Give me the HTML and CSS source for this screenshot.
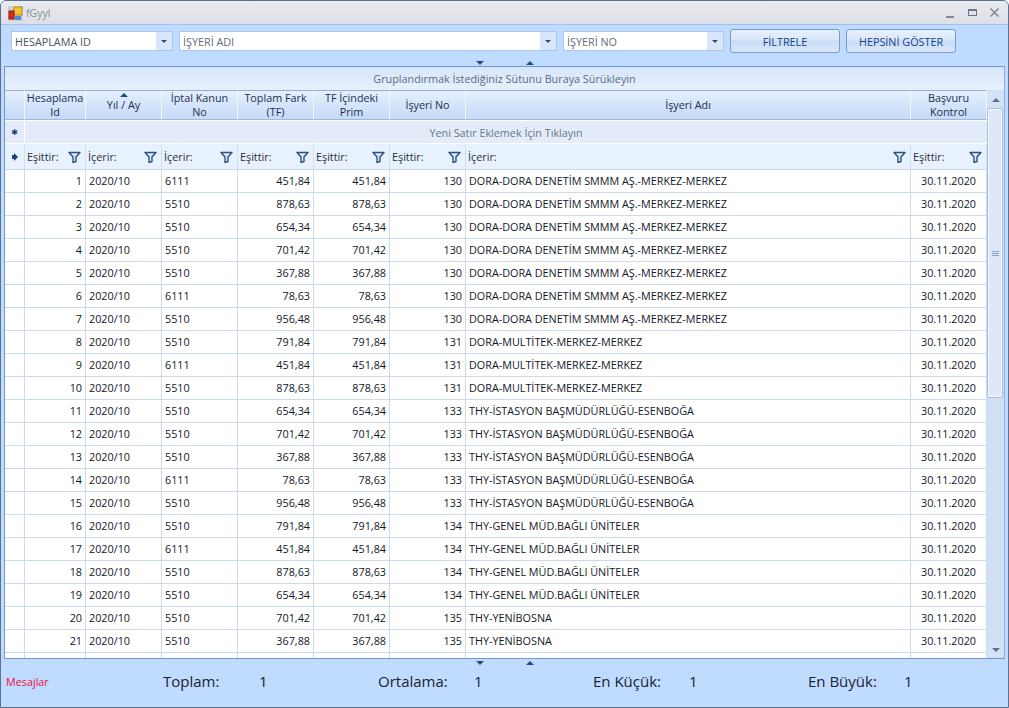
FILE: index.html
```html
<!DOCTYPE html>
<html lang="tr">
<head>
<meta charset="utf-8">
<title>fGyyl</title>
<link rel="stylesheet" href="styles.css">
</head>
<body>
<svg class="defs" width="0" height="0"><defs>
<symbol id="funnel" viewBox="0 0 13 12"><path d="M1 1.500h11L8 6v4.500l-3 1V6z" fill="#dbe8f8" stroke="#2c5080" stroke-width="1.400" stroke-linejoin="round"/></symbol>
</defs></svg>
<div class="window">
  <header class="titlebar">
    <svg class="appicon" width="15" height="15" viewBox="0 0 15 15"><rect x="0" y="0" width="15" height="15" fill="#cfcfcf"/><rect x="6" y="1" width="8" height="8" fill="#f4c430" stroke="#b98a1a"/><rect x="1" y="5" width="5" height="8" fill="#d42a20" stroke="#8f1a14"/><rect x="7" y="10" width="6" height="4" fill="#4a8ae0"/></svg>
    <span class="title">fGyyl</span>
    <div class="winbtns">
      <svg width="12" height="12" viewBox="0 0 12 12"><rect x="1" y="9" width="8" height="2" fill="#7f8894"/></svg>
      <svg width="12" height="12" viewBox="0 0 12 12"><rect x="1.500" y="2.500" width="8" height="6" fill="none" stroke="#6a7687"/><rect x="1" y="2" width="9" height="2" fill="#6a7687"/></svg>
      <svg width="12" height="12" viewBox="0 0 12 12"><path d="M1.500 1.500l8 8M9.500 1.500l-8 8" stroke="#7f8894" stroke-width="1.500"/></svg>
    </div>
  </header>
  <section class="filters">
    <div class="combo combo-id"><span>HESAPLAMA ID</span><i class="drop"></i></div>
    <div class="combo combo-name"><span>İŞYERİ ADI</span><i class="drop"></i></div>
    <div class="combo combo-no"><span>İŞYERİ NO</span><i class="drop"></i></div>
    <button class="btn btn-filter">FİLTRELE</button>
    <button class="btn btn-all">HEPSİNİ GÖSTER</button>
  </section>
  <div class="splitter"><i class="arrow-down"></i><i class="arrow-up"></i></div>
  <main class="grid">
    <div class="group">Gruplandırmak İstediğiniz Sütunu Buraya Sürükleyin</div>
    <div class="grid-body">
      <div class="table-wrap">
      <table>
        <colgroup><col class="c-ind"><col class="c-id"><col class="c-n"><col class="c-n"><col class="c-n"><col class="c-n"><col class="c-n"><col class="c-name"><col class="c-n"></colgroup>
        <thead>
          <tr class="head">
            <th></th><th>Hesaplama<br>Id</th><th class="sorted">Yıl / Ay</th><th>İptal Kanun<br>No</th><th>Toplam Fark<br>(TF)</th><th>TF İçindeki<br>Prim</th><th>İşyeri No</th><th>İşyeri Adı</th><th>Başvuru<br>Kontrol</th>
          </tr>
          <tr class="newrow">
            <td class="ind star">✱</td><td colspan="8">Yeni Satır Eklemek İçin Tıklayın</td>
          </tr>
          <tr class="filter">
            <td class="ind"><i class="focus"></i></td>
            <td><div class="f"><span>Eşittir:</span><svg width="13" height="12"><use href="#funnel"/></svg></div></td>
            <td><div class="f"><span>İçerir:</span><svg width="13" height="12"><use href="#funnel"/></svg></div></td>
            <td><div class="f"><span>İçerir:</span><svg width="13" height="12"><use href="#funnel"/></svg></div></td>
            <td><div class="f"><span>Eşittir:</span><svg width="13" height="12"><use href="#funnel"/></svg></div></td>
            <td><div class="f"><span>Eşittir:</span><svg width="13" height="12"><use href="#funnel"/></svg></div></td>
            <td><div class="f"><span>Eşittir:</span><svg width="13" height="12"><use href="#funnel"/></svg></div></td>
            <td><div class="f"><span>İçerir:</span><svg width="13" height="12"><use href="#funnel"/></svg></div></td>
            <td><div class="f"><span>Eşittir:</span><svg width="13" height="12"><use href="#funnel"/></svg></div></td>
          </tr>
        </thead>
        <tbody>
          <tr><td></td><td class="r">1</td><td>2020/10</td><td>6111</td><td class="r">451,84</td><td class="r">451,84</td><td class="r">130</td><td>DORA-DORA DENETİM SMMM AŞ.-MERKEZ-MERKEZ</td><td class="c">30.11.2020</td></tr>
          <tr><td></td><td class="r">2</td><td>2020/10</td><td>5510</td><td class="r">878,63</td><td class="r">878,63</td><td class="r">130</td><td>DORA-DORA DENETİM SMMM AŞ.-MERKEZ-MERKEZ</td><td class="c">30.11.2020</td></tr>
          <tr><td></td><td class="r">3</td><td>2020/10</td><td>5510</td><td class="r">654,34</td><td class="r">654,34</td><td class="r">130</td><td>DORA-DORA DENETİM SMMM AŞ.-MERKEZ-MERKEZ</td><td class="c">30.11.2020</td></tr>
          <tr><td></td><td class="r">4</td><td>2020/10</td><td>5510</td><td class="r">701,42</td><td class="r">701,42</td><td class="r">130</td><td>DORA-DORA DENETİM SMMM AŞ.-MERKEZ-MERKEZ</td><td class="c">30.11.2020</td></tr>
          <tr><td></td><td class="r">5</td><td>2020/10</td><td>5510</td><td class="r">367,88</td><td class="r">367,88</td><td class="r">130</td><td>DORA-DORA DENETİM SMMM AŞ.-MERKEZ-MERKEZ</td><td class="c">30.11.2020</td></tr>
          <tr><td></td><td class="r">6</td><td>2020/10</td><td>6111</td><td class="r">78,63</td><td class="r">78,63</td><td class="r">130</td><td>DORA-DORA DENETİM SMMM AŞ.-MERKEZ-MERKEZ</td><td class="c">30.11.2020</td></tr>
          <tr><td></td><td class="r">7</td><td>2020/10</td><td>5510</td><td class="r">956,48</td><td class="r">956,48</td><td class="r">130</td><td>DORA-DORA DENETİM SMMM AŞ.-MERKEZ-MERKEZ</td><td class="c">30.11.2020</td></tr>
          <tr><td></td><td class="r">8</td><td>2020/10</td><td>5510</td><td class="r">791,84</td><td class="r">791,84</td><td class="r">131</td><td>DORA-MULTİTEK-MERKEZ-MERKEZ</td><td class="c">30.11.2020</td></tr>
          <tr><td></td><td class="r">9</td><td>2020/10</td><td>6111</td><td class="r">451,84</td><td class="r">451,84</td><td class="r">131</td><td>DORA-MULTİTEK-MERKEZ-MERKEZ</td><td class="c">30.11.2020</td></tr>
          <tr><td></td><td class="r">10</td><td>2020/10</td><td>5510</td><td class="r">878,63</td><td class="r">878,63</td><td class="r">131</td><td>DORA-MULTİTEK-MERKEZ-MERKEZ</td><td class="c">30.11.2020</td></tr>
          <tr><td></td><td class="r">11</td><td>2020/10</td><td>5510</td><td class="r">654,34</td><td class="r">654,34</td><td class="r">133</td><td>THY-İSTASYON BAŞMÜDÜRLÜĞÜ-ESENBOĞA</td><td class="c">30.11.2020</td></tr>
          <tr><td></td><td class="r">12</td><td>2020/10</td><td>5510</td><td class="r">701,42</td><td class="r">701,42</td><td class="r">133</td><td>THY-İSTASYON BAŞMÜDÜRLÜĞÜ-ESENBOĞA</td><td class="c">30.11.2020</td></tr>
          <tr><td></td><td class="r">13</td><td>2020/10</td><td>5510</td><td class="r">367,88</td><td class="r">367,88</td><td class="r">133</td><td>THY-İSTASYON BAŞMÜDÜRLÜĞÜ-ESENBOĞA</td><td class="c">30.11.2020</td></tr>
          <tr><td></td><td class="r">14</td><td>2020/10</td><td>6111</td><td class="r">78,63</td><td class="r">78,63</td><td class="r">133</td><td>THY-İSTASYON BAŞMÜDÜRLÜĞÜ-ESENBOĞA</td><td class="c">30.11.2020</td></tr>
          <tr><td></td><td class="r">15</td><td>2020/10</td><td>5510</td><td class="r">956,48</td><td class="r">956,48</td><td class="r">133</td><td>THY-İSTASYON BAŞMÜDÜRLÜĞÜ-ESENBOĞA</td><td class="c">30.11.2020</td></tr>
          <tr><td></td><td class="r">16</td><td>2020/10</td><td>5510</td><td class="r">791,84</td><td class="r">791,84</td><td class="r">134</td><td>THY-GENEL MÜD.BAĞLI ÜNİTELER</td><td class="c">30.11.2020</td></tr>
          <tr><td></td><td class="r">17</td><td>2020/10</td><td>6111</td><td class="r">451,84</td><td class="r">451,84</td><td class="r">134</td><td>THY-GENEL MÜD.BAĞLI ÜNİTELER</td><td class="c">30.11.2020</td></tr>
          <tr><td></td><td class="r">18</td><td>2020/10</td><td>5510</td><td class="r">878,63</td><td class="r">878,63</td><td class="r">134</td><td>THY-GENEL MÜD.BAĞLI ÜNİTELER</td><td class="c">30.11.2020</td></tr>
          <tr><td></td><td class="r">19</td><td>2020/10</td><td>5510</td><td class="r">654,34</td><td class="r">654,34</td><td class="r">134</td><td>THY-GENEL MÜD.BAĞLI ÜNİTELER</td><td class="c">30.11.2020</td></tr>
          <tr><td></td><td class="r">20</td><td>2020/10</td><td>5510</td><td class="r">701,42</td><td class="r">701,42</td><td class="r">135</td><td>THY-YENİBOSNA</td><td class="c">30.11.2020</td></tr>
          <tr><td></td><td class="r">21</td><td>2020/10</td><td>5510</td><td class="r">367,88</td><td class="r">367,88</td><td class="r">135</td><td>THY-YENİBOSNA</td><td class="c">30.11.2020</td></tr>
          <tr><td></td><td></td><td></td><td></td><td></td><td></td><td></td><td></td><td></td></tr>
        </tbody>
      </table>
      </div>
      <div class="scrollbar">
        <div class="sb-btn"><i class="sb-up"></i></div>
        <div class="sb-thumb"><i></i></div>
        <div class="sb-track"></div>
        <div class="sb-btn"><i class="sb-down"></i></div>
      </div>
    </div>
  </main>
  <div class="splitter lower"><i class="arrow-down"></i><i class="arrow-up"></i></div>
  <footer class="summary">
    <span class="msg">Mesajlar</span>
    <div class="stat"><span class="k">Toplam:</span><span>1</span></div>
    <div class="stat"><span class="k">Ortalama:</span><span>1</span></div>
    <div class="stat"><span class="k">En Küçük:</span><span>1</span></div>
    <div class="stat"><span class="k">En Büyük:</span><span>1</span></div>
  </footer>
</div>
</body>
</html>
```
FILE: styles.css
```css
* { box-sizing: border-box; }
html, body { margin: 0; padding: 0; }
body { width: 1009px; height: 708px; overflow: hidden; background: #fff; font-family: "Open Sans", "Noto Sans", sans-serif; font-size: 10.800px; color: #101828; }
.defs { position: absolute; }
.window { width: 1009px; height: 708px; display: flex; flex-direction: column; background: #bfdbff; border: 1px solid #5d7090; border-radius: 6px 6px 0 0; overflow: hidden; }
.titlebar { flex: none; height: 24px; display: flex; align-items: center; padding: 0 7px 0 7px; background: linear-gradient(#e9ebef, #dcdfe5); border-bottom: 1px solid #9dc0ee; }
.appicon { display: block; margin-top: 1px; }
.title { margin-left: 3px; font-size: 10.500px; color: #8a8f98; }
.winbtns { margin-left: auto; display: flex; gap: 10px; }
.filters { flex: none; height: 34px; display: flex; align-items: center; padding: 0 0 2px 10px; }
.combo { height: 20px; display: flex; align-items: center; justify-content: space-between; background: #fff; border: 1px solid #a9c6ee; padding-left: 3px; margin-right: 6px; color: #5e6b7c; }
.combo-id { width: 162px; color: #4a5463; }
.combo-name { width: 378px; }
.combo-no { width: 161px; }
.drop { width: 16px; height: 18px; background: #d9e6f8; display: flex; align-items: center; justify-content: center; }
.drop::after { content: ""; border: 3px solid transparent; border-top: 3px solid #2f4a72; border-bottom: 0; }
.btn { height: 24px; padding: 0; margin-right: 6px; border: 1px solid #7a9cc6; border-radius: 3px; background: linear-gradient(#e6f0fd 0, #dbe8fa 45%, #c9dcf6 50%, #d8e6fa 100%); color: #15428b; font: inherit; }
.btn-filter { width: 110px; }
.btn-all { width: 110px; }
.splitter { flex: none; height: 7px; display: flex; justify-content: center; align-items: center; gap: 42px; padding-left: 1px; }
.arrow-down { width: 0; height: 0; border: 4px solid transparent; border-top: 4px solid #1f4a8a; border-bottom: 0; }
.arrow-up { width: 0; height: 0; border: 4px solid transparent; border-bottom: 4px solid #1f4a8a; border-top: 0; }
.grid { flex: none; margin: 0 3px 0 3px; height: 593px; display: flex; flex-direction: column; border: 1px solid #7398d0; border-right: 1px solid #8fb0e0; overflow: hidden; background: #fff; }
.group { flex: none; height: 23px; line-height: 23px; text-align: center; background: linear-gradient(#d6e5f9, #e8f1fc); color: #5c6b7e; }
.grid-body { flex: 1; min-height: 0; display: flex; }
.table-wrap { width: 982px; flex: none; overflow: hidden; }
table { width: 982px; table-layout: fixed; border-collapse: separate; border-spacing: 0; }
.c-ind { width: 20px; }
.c-id { width: 61px; }
.c-n { width: 76px; }
.c-name { width: 445px; }
th, td { padding: 0 3px; border-right: 1px solid #c9daf2; border-bottom: 1px solid #c9daf2; white-space: nowrap; overflow: hidden; font-weight: 400; }
tbody tr { height: 23px; }
tbody td { vertical-align: middle; padding-bottom: 1px; }
.r { text-align: right; }
.c { text-align: center; }
.head { height: 30px; }
.head th { padding: 0; line-height: 14px; text-align: center; color: #1c2f4d; background: linear-gradient(#e6f0fd, #d4e4fa 50%, #c5dbf8); border-top: 1px solid #8fb0de; border-right: 1px solid #f0f6fe; border-bottom: 1px solid #9db9de; }
.sorted { position: relative; }
.sorted::before { content: ""; position: absolute; top: 2px; left: 50%; margin-left: -4px; border: 4px solid transparent; border-bottom: 4px solid #1f4a8a; border-top: 0; }
.newrow { height: 24px; }
.newrow td { text-align: center; background: #e3ecf8; color: #6a7687; border-top: 1px solid #fff; border-right: 0; border-bottom: 1px solid #fff; }
.newrow .ind { border-right: 1px solid #fff; }
.newrow .star { padding: 0; color: #1b3f78; font-size: 8px; font-family: "DejaVu Sans", sans-serif; }
.filter { height: 26px; }
.filter td { background: #e8f2fe; border-right: 1px solid #cfe0f5; color: #2a2f3a; padding-left: 2px; }
.filter .ind { padding: 0; text-align: center; }
.f { display: flex; justify-content: space-between; align-items: center; }
.f svg { display: block; flex: none; margin-right: 1px; }
.focus { display: inline-block; width: 2px; height: 4px; background: #1b3f78; position: relative; margin-left: -3px; vertical-align: 2px; }
.focus::after { content: ""; position: absolute; left: 2px; top: -2px; border: 4px solid transparent; border-left: 4px solid #1b3f78; border-right: 0; }
.scrollbar { flex: 1; display: flex; flex-direction: column; background: #cfdff4; padding-top: 1px; }
.sb-btn { flex: none; height: 17px; display: flex; align-items: center; justify-content: center; background: #d3e2f6; }
.sb-up { border: 4px solid transparent; border-bottom: 4px solid #5c6f8c; border-top: 0; }
.sb-down { border: 4px solid transparent; border-top: 4px solid #5c6f8c; border-bottom: 0; }
.sb-thumb { flex: none; height: 290px; display: flex; align-items: center; justify-content: center; background: #dde9f9; border: 1px solid #a8bfdc; border-radius: 2px; box-shadow: inset 0 0 0 1px #f4f8fe; margin: 0 1px 0 0; }
.sb-thumb i { width: 7px; height: 5px; border-top: 1px solid #8ba2c2; border-bottom: 1px solid #8ba2c2; background: linear-gradient(#8ba2c2, #8ba2c2) center / 100% 1px no-repeat; }
.sb-track { flex: 1; }
.summary { flex: 1; display: flex; align-items: center; padding: 0 0 11px 5px; font-size: 15px; color: #1a2230; }
.msg { width: 157px; color: #f0103c; font-size: 10.800px; flex: none; }
.stat { width: 215px; flex: none; display: flex; }
.k { width: 96px; flex: none; }
```
